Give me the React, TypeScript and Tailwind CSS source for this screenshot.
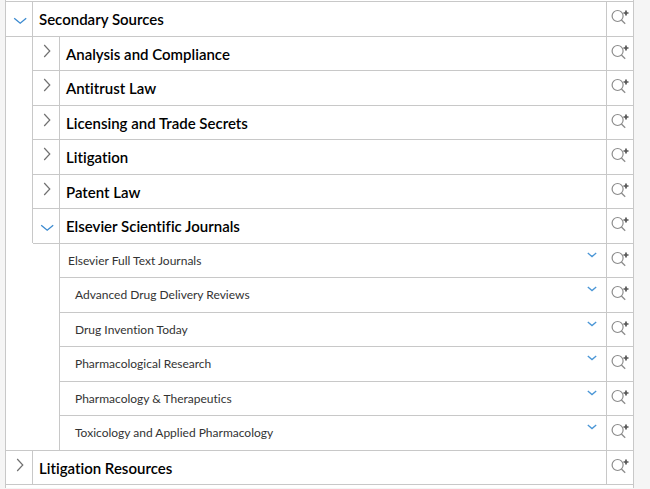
import React, { useState } from 'react';

type Node = { label: string; children?: Node[]; leaf?: boolean; indent?: boolean };

const sources: Node[] = [
  {
    label: 'Secondary Sources',
    children: [
      { label: 'Analysis and Compliance' },
      { label: 'Antitrust Law' },
      { label: 'Licensing and Trade Secrets' },
      { label: 'Litigation' },
      { label: 'Patent Law' },
      {
        label: 'Elsevier Scientific Journals',
        children: [
          { label: 'Elsevier Full Text Journals', leaf: true },
          { label: 'Advanced Drug Delivery Reviews', leaf: true, indent: true },
          { label: 'Drug Invention Today', leaf: true, indent: true },
          { label: 'Pharmacological Research', leaf: true, indent: true },
          { label: 'Pharmacology & Therapeutics', leaf: true, indent: true },
          { label: 'Toxicology and Applied Pharmacology', leaf: true, indent: true },
        ],
      },
    ],
  },
  { label: 'Litigation Resources' },
];

const listIndent = ['', 'ml-[26px]', 'ml-[27px]'];

function ChevronRight() {
  return (
    <svg width="8" height="14" viewBox="0 0 8 14" fill="none" stroke="#707070" strokeWidth="1.2" aria-hidden="true">
      <path d="M1.2 1l5.6 6-5.6 6" />
    </svg>
  );
}

function ChevronDown() {
  return (
    <svg width="14" height="8" viewBox="0 0 14 8" fill="none" stroke="#3b8ad0" strokeWidth="1.3" aria-hidden="true">
      <path d="M1.2 1.2l6 5 6-5" />
    </svg>
  );
}

function SmallChevron() {
  return (
    <svg width="10" height="6" viewBox="0 0 10 6" fill="none" stroke="#4a96d6" strokeWidth="1.3" aria-hidden="true">
      <path d="M.8 1L5 4.6 9.2 1" />
    </svg>
  );
}

function SearchAdd() {
  return (
    <svg width="18" height="16" viewBox="0 0 18 16" fill="none" aria-hidden="true">
      <circle cx="6.6" cy="7" r="5.5" stroke="#8c8c8c" strokeWidth="1.2" />
      <path d="M10.4 11l3.8 3.8" stroke="#8c8c8c" strokeWidth="1.3" />
      <path d="M15 1.5v5M12.5 4h5" stroke="#555" strokeWidth="1.7" />
    </svg>
  );
}

type RowProps = { node: Node; depth: number; open: boolean; onToggle: () => void; odd: boolean };

function Row({ node, depth, open, onToggle, odd }: RowProps) {
  return (
    <div
      className={`flex border-t border-[#c8c8c8] ${odd ? 'h-[34px]' : 'h-[35px]'} ${depth > 0 ? 'border-l' : ''}`}
    >
      {!node.leaf && (
        <button
          type="button"
          aria-expanded={open}
          aria-label={`Toggle ${node.label}`}
          onClick={onToggle}
          className={`flex w-[27px] shrink-0 items-start justify-center border-r border-[#c8c8c8] pl-px ${
            open ? '-mb-px border-b pt-[15px]' : 'pt-[7px]'
          }`}
        >
          {open ? <ChevronDown /> : <ChevronRight />}
        </button>
      )}
      {node.leaf ? (
        <>
          <span
            className={`min-w-0 flex-1 truncate pt-2 text-[12px] leading-[18px] text-[#333] ${
              node.indent ? 'pl-[15px]' : 'pl-2'
            }`}
          >
            {node.label}
          </span>
          <button type="button" aria-label={`Show ${node.label}`} className="flex w-7 items-start justify-center pt-2">
            <SmallChevron />
          </button>
        </>
      ) : (
        <span className="min-w-0 flex-1 truncate pt-[7px] pl-1.5 text-[15px] leading-5 font-semibold text-black">
          {node.label}
        </span>
      )}
      <button
        type="button"
        aria-label={`Add ${node.label} to search`}
        className="flex w-[27px] shrink-0 items-start border-l border-[#c8c8c8] pt-[7px] pl-1"
      >
        <SearchAdd />
      </button>
    </div>
  );
}

function count(node: Node): number {
  return 1 + (node.children ?? []).reduce((n, c) => n + count(c), 0);
}

function Branch({ nodes, start, depth }: { nodes: Node[]; start: number; depth: number }) {
  const [closed, setClosed] = useState<string[]>([]);
  let index = start;
  return (
    <ul className={listIndent[depth]}>
      {nodes.map((node) => {
        const at = index;
        index += count(node);
        const open = !!node.children && !closed.includes(node.label);
        return (
          <li key={node.label}>
            <Row
              node={node}
              depth={depth}
              open={open}
              odd={at % 2 === 1}
              onToggle={() =>
                setClosed((c) => (c.includes(node.label) ? c.filter((l) => l !== node.label) : [...c, node.label]))
              }
            />
            {open && <Branch nodes={node.children!} start={at + 1} depth={depth + 1} />}
          </li>
        );
      })}
    </ul>
  );
}

export default function App() {
  return (
    <main className="min-h-screen bg-[#f5f5f5] pr-4 pl-[5px] font-['Lato',sans-serif] [font-variant-ligatures:none]">
      <div className="border-x border-[#c8c8c8] bg-white pt-px">
        <Branch nodes={sources} start={0} depth={0} />
        <div className="h-1 border-t border-[#c8c8c8]" />
      </div>
    </main>
  );
}
